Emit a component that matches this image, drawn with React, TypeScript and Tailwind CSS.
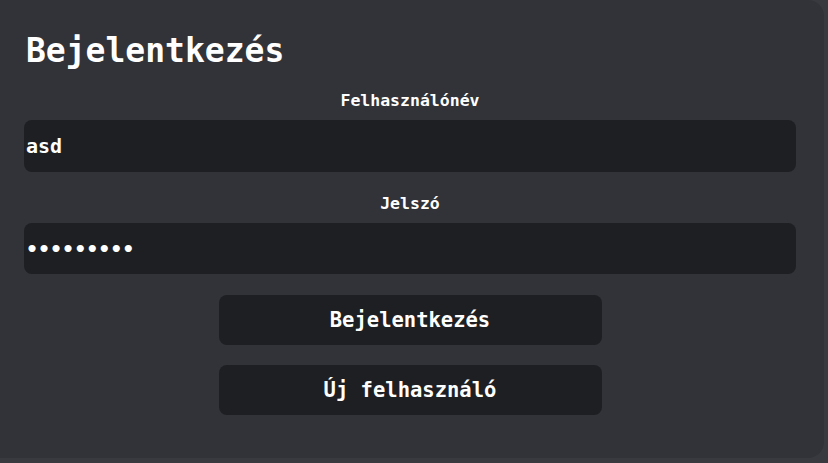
import { useState } from 'react'

const MONO = "font-['DejaVu_Sans_Mono',monospace]"

export default function App() {
  const [user, setUser] = useState('asd')
  const [pass, setPass] = useState('asdasdasd')

  return (
    <div className={`min-h-screen bg-[#383a40] ${MONO}`}>
      <div className="flex h-[458px] w-[824px] flex-col rounded-tr-2xl rounded-br-2xl bg-[#313338] pl-6 pr-7 pt-[32px] text-white">
        <h1 className="ml-[2px] text-[33px] font-bold leading-[38px]">Bejelentkezés</h1>

        <Label className="mt-[21px]">Felhasználónév</Label>
        <input
          value={user}
          onChange={(e) => setUser(e.target.value)}
          className="mt-[10px] h-[52px] w-full rounded-lg bg-[#1e1f22] px-[2px] text-[20px] font-bold text-white outline-none"
        />

        <Label className="mt-[22px]">Jelszó</Label>
        <input
          type="password"
          value={pass}
          onChange={(e) => setPass(e.target.value)}
          className="mt-[10px] h-[51px] w-full rounded-lg bg-[#1e1f22] px-[2px] text-[20px] font-bold text-white outline-none"
        />

        <div className="mt-[21px] flex flex-col items-center gap-5">
          <Button>Bejelentkezés</Button>
          <Button>Új felhasználó</Button>
        </div>
      </div>
    </div>
  )
}

function Label({ children, className = '' }: { children: string; className?: string }) {
  return (
    <label className={`block text-center text-[16.5px] font-bold leading-[19px] ${className}`}>
      {children}
    </label>
  )
}

function Button({ children }: { children: string }) {
  return (
    <button className="h-[50px] w-[383px] rounded-lg bg-[#1e1f22] text-[20.5px] font-bold text-white">
      {children}
    </button>
  )
}
